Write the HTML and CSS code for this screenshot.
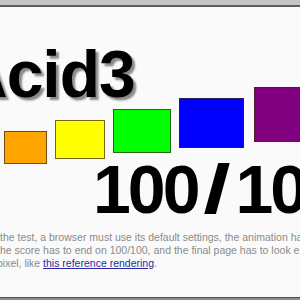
FILE: index.html
```html
<!DOCTYPE html>
<html lang="en">
<head>
  <meta charset="UTF-8">
  <title>Acid3</title>
  <link rel="stylesheet" href="styles.css">
</head>
<body>
  <div class="top-bar"></div>
  <div class="page">
    <h1 class="title">Acid3</h1>
    <div class="boxes">
      <div class="box orange"></div>
      <div class="box yellow"></div>
      <div class="box green"></div>
      <div class="box blue"></div>
      <div class="box purple"></div>
    </div>
    <div class="score">100<span class="slash">/</span>100</div>
    <p class="note">the test, a browser must use its default settings, the animation has to be smooth,<br>
      the score has to end on 100/100, and the final page has to look exactly, pixel for<br>
      pixel, like <a href="#">this reference rendering</a>.</p>
  </div>
  <div class="bottom-bar"></div>
</body>
</html>
```
FILE: styles.css
```css
html, body {
  margin: 0;
  padding: 0;
  height: 300px;
  overflow: hidden;
}

body {
  display: flex;
  flex-direction: column;
  font-family: "Liberation Sans", Arial, sans-serif;
  background-color: #fafafa;
}

.top-bar {
  height: 5px;
  background-color: #c4c4c4;
  border-bottom: 2px solid #5c5c5c;
  flex-shrink: 0;
}

.bottom-bar {
  height: 2px;
  background-color: #8c8c8c;
  border-top: 1px solid #505050;
  flex-shrink: 0;
}

.page {
  flex: 1;
  overflow: hidden;
  white-space: nowrap;
}

.title {
  margin: 54px 0 0 -40px;
  font-size: 66px;
  font-weight: bold;
  line-height: 26px;
  letter-spacing: -1px;
  color: #000;
  text-shadow: 3px 3px 2px #8a8a8a;
}

.boxes {
  display: flex;
  align-items: flex-start;
  gap: 8px;
  padding-left: 4px;
  height: 77px;
}

.box {
  flex-shrink: 0;
  box-sizing: border-box;
  border: 1px solid rgba(60, 40, 20, 0.7);
}

.orange {
  width: 43px;
  height: 33px;
  margin-top: 44px;
  background-color: #ffa500;
}

.yellow {
  width: 50px;
  height: 39px;
  margin-top: 33px;
  background-color: #ffff00;
}

.green {
  width: 58px;
  height: 44px;
  margin-top: 22px;
  background-color: #00ff00;
}

.blue {
  width: 65px;
  height: 50px;
  margin-top: 11px;
  background-color: #0000ff;
}

.purple {
  width: 72px;
  height: 55px;
  margin-left: 2px;
  background-color: #800080;
}

.score {
  padding-left: 93px;
  font-size: 68px;
  font-weight: bold;
  line-height: 50px;
  letter-spacing: -3px;
  color: #000;
}

.slash {
  display: inline-block;
  width: 36px;
  margin-left: 2px;
  text-align: center;
  letter-spacing: 0;
  transform: scaleX(1.45);
}

.note {
  margin: 17px 0 0 -3px;
  text-indent: 3px;
  font-size: 10.5px;
  line-height: 13px;
  color: #8a8a8a;
}

.note a {
  color: #2a2aa8;
}
```
